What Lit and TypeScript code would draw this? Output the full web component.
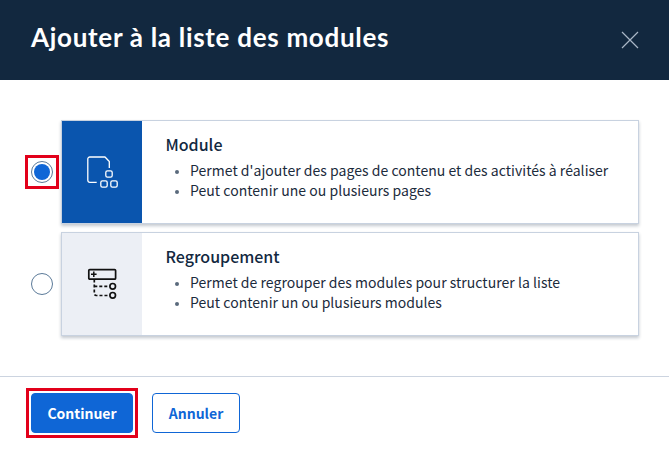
import { LitElement, html, css, svg } from 'lit';
import { customElement } from 'lit/decorators.js';

const moduleIcon = svg`
  <path d="M10.700 26.300H3.800a2 2 0 0 1-2-2V3a2 2 0 0 1 2-2H19l4.300 4.500v6.500" fill="none" stroke="#fff" stroke-width="1.300" stroke-linejoin="round"/>
  <rect x="19.800" y="14.800" width="6.400" height="6.400" rx="1.600" fill="none" stroke="#fff" stroke-width="1.300"/>
  <rect x="14.800" y="24.800" width="6.400" height="6.400" rx="1.600" fill="none" stroke="#fff" stroke-width="1.300"/>
  <rect x="24.800" y="24.800" width="6.400" height="6.400" rx="1.600" fill="none" stroke="#fff" stroke-width="1.300"/>
`;

const groupIcon = svg`
  <rect x="2.800" y="1.600" width="26.800" height="9.600" rx="1" fill="none" stroke="#111" stroke-width="1.700"/>
  <path d="M7.800 3.500v5.600M5 6.300h5.600" stroke="#111" stroke-width="1.500"/>
  <path d="M8.300 11.500v14a2 2 0 0 0 2 2H23.500M8.300 18.300H23.500" fill="none" stroke="#111" stroke-width="1.700" stroke-dasharray="3 2"/>
  <circle cx="26.700" cy="18.300" r="2.800" fill="none" stroke="#111" stroke-width="1.700"/>
  <circle cx="26.700" cy="27.300" r="2.800" fill="none" stroke="#111" stroke-width="1.700"/>
`;

@customElement('app-root')
export class AppRoot extends LitElement {
  static styles = css`
    :host {
      display: block;
      width: 669px;
      height: 455px;
      overflow: hidden;
      background: #fff;
      color: #12283f;
      font-family: 'Noto Sans CJK SC', 'Noto Sans', sans-serif;
    }

    .header {
      height: 80px;
      background: #12283f;
      color: #fff;
      display: flex;
      align-items: center;
      justify-content: space-between;
      padding: 0 31px;
    }

    .header h1 {
      margin: 0 0 6px;
      font-family: Lato, sans-serif;
      font-size: 26px;
      font-weight: 700;
      letter-spacing: 0.7px;
    }

    .close {
      width: 18px;
      height: 18px;
      margin: 0 -1px 0 0;
      padding: 0;
      border: 0;
      background: none;
    }

    .close svg {
      display: block;
    }

    .body {
      height: 297px;
      box-sizing: border-box;
      padding: 40px 30px 0 25px;
      border-bottom: 1px solid #ccd4e0;
      display: flex;
      flex-direction: column;
      gap: 8px;
    }

    .row {
      display: flex;
      align-items: center;
    }

    .radio-box {
      width: 34px;
      height: 34px;
      box-sizing: border-box;
      flex: none;
      margin-right: 2px;
      display: flex;
      align-items: center;
      justify-content: center;
    }

    .radio-box.focus {
      border: 3px solid #e2001a;
    }

    .radio {
      width: 22px;
      height: 22px;
      box-sizing: border-box;
      border-radius: 50%;
      border: 1px solid #5b7a99;
      background: #fff;
      display: flex;
      align-items: center;
      justify-content: center;
    }

    .dot {
      width: 16px;
      height: 16px;
      border-radius: 50%;
      background: #0f66d6;
    }

    .card {
      flex: 1;
      height: 104px;
      box-sizing: border-box;
      display: flex;
      background: #fff;
      border: 1px solid #c8d2e0;
      box-shadow: 0 2px 3px rgba(18, 40, 63, 0.25);
    }

    .thumb {
      width: 80px;
      flex: none;
      display: flex;
      align-items: center;
      justify-content: center;
      background: #eceff5;
    }

    .thumb.active {
      background: #0a55ae;
    }

    .info {
      padding: 11px 0 0 23.500px;
    }

    .info h2 {
      margin: 0;
      font-size: 16px;
      line-height: 24px;
      font-weight: 500;
    }

    .info ul {
      margin: 4px 0 0;
      padding: 0 0 0 24.500px;
      font-size: 14px;
      line-height: 20px;
      letter-spacing: 0.03px;
      color: #1c2b3c;
    }

    .info li::marker {
      color: #5a6a7c;
      font-size: 11px;
    }

    .footer {
      display: flex;
      align-items: center;
      gap: 14px;
      padding: 11px 0 0 26px;
    }

    .focus-ring {
      border: 3px solid #e2001a;
      padding: 2px;
      display: flex;
    }

    button.action {
      height: 40px;
      box-sizing: border-box;
      border-radius: 4px;
      font: inherit;
      font-size: 14px;
      font-weight: 700;
      border: 1px solid #0f66d6;
    }

    .primary {
      width: 102px;
      background: #0f66d6;
      color: #fff;
    }

    .secondary {
      width: 88px;
      background: #fff;
      color: #0f66d6;
    }
  `;

  render() {
    return html`
      <div class="header">
        <h1>Ajouter à la liste des modules</h1>
        <button class="close">
          <svg width="18" height="18" viewBox="0 0 18 18">
            <path d="M1 1l16 16M17 1L1 17" stroke="#a9b6c6" stroke-width="1.200"/>
          </svg>
        </button>
      </div>
      <div class="body">
        <div class="row">
          <div class="radio-box focus"><span class="radio"><span class="dot"></span></span></div>
          <div class="card">
            <div class="thumb active"><svg width="32" height="32" viewBox="0 0 32 32">${moduleIcon}</svg></div>
            <div class="info">
              <h2>Module</h2>
              <ul>
                <li>Permet d'ajouter des pages de contenu et des activités à réaliser</li>
                <li>Peut contenir une ou plusieurs pages</li>
              </ul>
            </div>
          </div>
        </div>
        <div class="row">
          <div class="radio-box"><span class="radio"></span></div>
          <div class="card">
            <div class="thumb"><svg width="32" height="32" viewBox="0 0 32 32">${groupIcon}</svg></div>
            <div class="info">
              <h2>Regroupement</h2>
              <ul>
                <li>Permet de regrouper des modules pour structurer la liste</li>
                <li>Peut contenir un ou plusieurs modules</li>
              </ul>
            </div>
          </div>
        </div>
      </div>
      <div class="footer">
        <div class="focus-ring"><button class="action primary">Continuer</button></div>
        <button class="action secondary">Annuler</button>
      </div>
    `;
  }
}
